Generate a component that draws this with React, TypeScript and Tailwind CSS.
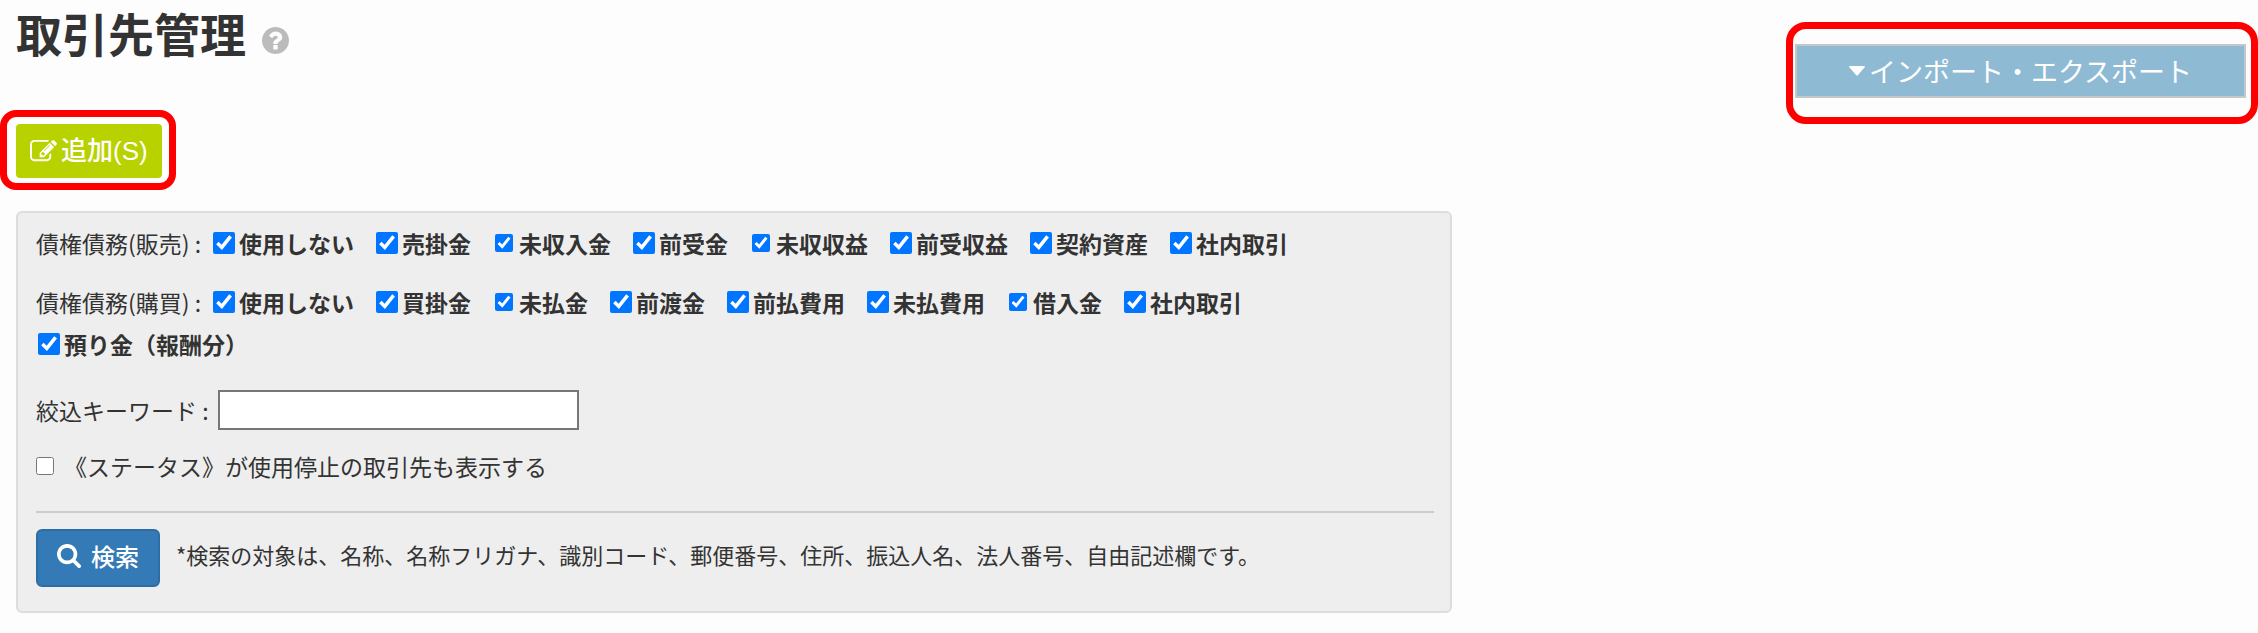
import React, { useState } from "react";

const QUESTION =
  "M1024 1376v-192q0-14-9-23t-23-9h-192q-14 0-23 9t-9 23v192q0 14 9 23t23 9h192q14 0 23-9t9-23zm256-672q0-88-55.5-163t-138.5-116-170-41q-243 0-371 222-15 24 8 42l132 100q7 6 19 6 16 0 25-12 53-68 86-92 34-24 86-24 48 0 85.5 26t37.5 59q0 38-20 61t-68 45q-63 28-115.5 86.5t-52.5 125.5v36q0 14 9 23t23 9h192q14 0 23-9t9-23q0-19 21.5-49.5t54.5-49.5q32-18 49-28.5t46-35 44.5-48 28-60.5 12.5-81zm384 192q0 209-103 385.5t-279.5 279.5-385.5 103-385.5-103-279.5-279.5-103-385.5 103-385.5 279.5-279.5 385.5-103 385.5 103 279.5 279.5 103 385.5z";
const EDIT =
  "M888 1184l116-116-152-152-116 116v56h96v96h56zm440-720q-16-16-33 1l-350 350q-17 17-1 33t33-1l350-350q17-17 1-33zm80 594v190q0 119-84.5 203.5t-203.5 84.5h-832q-119 0-203.5-84.5t-84.5-203.5v-832q0-119 84.5-203.5t203.5-84.5h832q63 0 117 25 15 7 18 23 3 17-9 29l-49 49q-14 14-32 8-23-6-45-6h-832q-66 0-113 47t-47 113v832q0 66 47 113t113 47h832q66 0 113-47t47-113v-126q0-13 9-22l64-64q15-15 35-7t20 29zm-96-738l288 288-672 672h-288v-288zm444 132l-92 92-288-288 92-92q28-28 68-28t68 28l152 152q28 28 28 68t-28 68z";
const SEARCH =
  "M1216 832q0-185-131.5-316.5t-316.5-131.5-316.5 131.5-131.5 316.5 131.5 316.5 316.5 131.5 316.5-131.5 131.5-316.5zm512 832q0 52-38 90t-90 38q-54 0-90-38l-343-342q-179 124-399 124-143 0-273.5-55.5t-225-150-150-225-55.5-273.5 55.5-273.5 150-225 225-150 273.5-55.5 273.5 55.5 225 150 150 225 55.5 273.5q0 220-124 399l343 343q37 37 37 90z";

function Icon({ d, className, box = "0 0 1792 1792" }: { d: string; className: string; box?: string }) {
  return (
    <svg viewBox={box} fill="currentColor" aria-hidden="true" className={className}>
      <path d={d} />
    </svg>
  );
}

type Option = { label: string; small?: boolean };

const SALES: Option[] = [
  { label: "使用しない" },
  { label: "売掛金" },
  { label: "未収入金", small: true },
  { label: "前受金" },
  { label: "未収収益", small: true },
  { label: "前受収益" },
  { label: "契約資産" },
  { label: "社内取引" },
];

const PURCHASES: Option[] = [
  { label: "使用しない" },
  { label: "買掛金" },
  { label: "未払金", small: true },
  { label: "前渡金" },
  { label: "前払費用" },
  { label: "未払費用" },
  { label: "借入金", small: true },
  { label: "社内取引" },
  { label: "預り金（報酬分）" },
];

function CheckOption({ label, small }: Option) {
  const [checked, setChecked] = useState(true);
  return (
    <label className="mr-5 flex h-[42px] items-center gap-1 pl-0.5 font-bold whitespace-nowrap">
      <span className="flex size-[22px] items-center justify-center">
        <input
          type="checkbox"
          checked={checked}
          onChange={(e) => setChecked(e.target.checked)}
          className={small ? "size-[18px]" : "size-[22px]"}
        />
      </span>
      {label}
    </label>
  );
}

function OptionGroup({ title, options }: { title: string; options: Option[] }) {
  return (
    <div role="group" aria-label={title} className="flex flex-wrap items-center">
      <span className="w-[175px] whitespace-nowrap">{title} :</span>
      {options.map((o) => (
        <CheckOption key={o.label} {...o} />
      ))}
    </div>
  );
}

export default function App() {
  const [keyword, setKeyword] = useState("");
  const [showStopped, setShowStopped] = useState(false);
  return (
    <div className="min-h-screen bg-[#fdfdfd] pb-5 font-['Noto_Sans_CJK_JP',sans-serif] text-[23px] leading-6 text-[#333]">
      <header className="flex items-start justify-between">
        <div>
          <div className="flex h-16 items-center pl-4">
            <h1 className="text-[46px] leading-none font-bold">取引先管理</h1>
            <Icon d={QUESTION} box="128 128 1536 1536" className="mt-4 ml-4 size-[27px] text-[#bbb]" />
          </div>
          <div className="mt-[46px] w-fit rounded-2xl border-7 border-[#ff0000] bg-white pt-[7px] pr-[7px] pb-[5px] pl-[9px]">
            <button
              type="button"
              className="flex h-[54px] w-[146px] items-center gap-1 rounded-[4px] bg-[#b8d200] pl-3.5 font-['Liberation_Sans','Noto_Sans_CJK_JP',sans-serif] text-[26px] font-medium whitespace-nowrap text-white"
            >
              <Icon d={EDIT} className="size-[27px] shrink-0" />
              追加(S)
            </button>
          </div>
        </div>
        <div className="mt-[22px] rounded-[20px] border-7 border-[#ff0000] pt-[15px] pr-[5px] pb-[19px] pl-0.5">
          <button
            type="button"
            className="flex h-[54px] w-[451px] items-center justify-center gap-1 border-2 border-[#c4c8ca] bg-[#8fbad4] text-[27px] text-white"
          >
            <svg viewBox="0 0 16 10" fill="currentColor" aria-hidden="true" className="h-[10px] w-4">
              <path d="M1 0h14q1.500 0 .5 1.500L9 9q-1 1-2 0L.5 1.500Q-.5 0 1 0z" />
            </svg>
            インポート・エクスポート
          </button>
        </div>
      </header>

      <form
        onSubmit={(e) => e.preventDefault()}
        className="mt-[21px] mr-4 ml-4 max-w-[1436px] rounded-md border-2 border-[#ddd] bg-[#eee] pt-[9px] pr-4 pb-6 pl-[18px]"
      >
        <OptionGroup title="債権債務(販売)" options={SALES} />
        <div className="mt-[17px]">
          <OptionGroup title="債権債務(購買)" options={PURCHASES} />
        </div>
        <div className="mt-[25px] flex items-center">
          <label htmlFor="keyword" className="w-[182px] whitespace-nowrap">
            絞込キーワード :
          </label>
          <input
            id="keyword"
            type="text"
            value={keyword}
            onChange={(e) => setKeyword(e.target.value)}
            className="h-10 w-[361px] border-2 border-[#767676] bg-white px-2"
          />
        </div>
        <label className="mt-6 flex w-fit items-center gap-2.5">
          <input
            type="checkbox"
            checked={showStopped}
            onChange={(e) => setShowStopped(e.target.checked)}
            className="size-[18px]"
          />
          《ステータス》が使用停止の取引先も表示する
        </label>
        <hr className="mt-[33px] border-t-2 border-[#ccc]" />
        <div className="mt-4 flex items-center gap-4">
          <button
            type="submit"
            className="flex h-[58px] w-[124px] shrink-0 items-center justify-center gap-2.5 rounded-md border-2 border-[#2e6da4] bg-[#337ab7] pb-1 text-[24px] font-medium text-white"
          >
            <Icon d={SEARCH} box="64 128 1664 1664" className="size-6" />
            検索
          </button>
          <p className="pb-2 text-[22px]">
            *検索の対象は、名称、名称フリガナ、識別コード、郵便番号、住所、振込人名、法人番号、自由記述欄です。
          </p>
        </div>
      </form>
    </div>
  );
}
